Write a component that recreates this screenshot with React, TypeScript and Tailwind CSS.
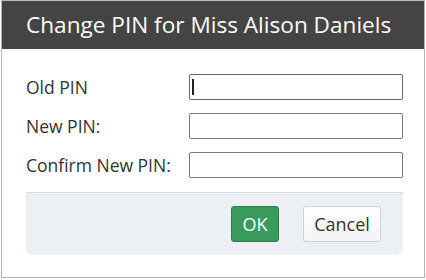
export default function App() {
  const fields = ['Old PIN', 'New PIN:', 'Confirm New PIN:'];

  return (
    <div className="w-[426px] h-[280px] bg-white" style={{ fontFamily: '"Open Sans", sans-serif' }}>
      <div className="ml-[1px] w-[424px] h-[278px] border border-t-0 border-[#b4b4b4] flex flex-col">
        <div className="h-[49px] bg-[#444444] flex items-center pl-[24px] text-white text-[22.6px] border-t border-[#bdbdbd]">
          Change PIN for Miss Alison Daniels
        </div>
        <div className="pl-[24px] pr-[21px] pt-[25px] flex flex-col">
          {fields.map((label, i) => (
            <div key={label} className="flex items-center h-[26px] mb-[13px]">
              <div className="w-[163px] shrink-0 text-[17.5px] text-[#333333]">{label}</div>
              <div
                className={
                  'relative w-[214px] shrink-0 h-[26px] rounded-[2px] border bg-white ' +
                  (i === 0 ? 'border-[#666666]' : 'border-[#7a7a7a]')
                }
              >
                {i === 0 && <div className="absolute left-[2px] top-[4px] w-[1.5px] h-[16px] bg-[#222222]" />}
              </div>
            </div>
          ))}
        </div>
        <div className="ml-[24px] mr-[21px] mt-[1px] h-[63px] bg-[#ecf0f4] border-t border-[#d9dee4] rounded-b-[6px] flex items-center justify-end pr-[22px] gap-[24px]">
          <button className="w-[48px] h-[36px] rounded-[3px] bg-[#3a9a5d] border border-[#2e7e4b] text-white text-[18px]">
            OK
          </button>
          <button className="w-[78px] h-[36px] rounded-[3px] bg-gradient-to-b from-white to-[#f3f4f5] border border-[#cfd3d7] text-[#333333] text-[18px]">
            Cancel
          </button>
        </div>
      </div>
    </div>
  );
}
